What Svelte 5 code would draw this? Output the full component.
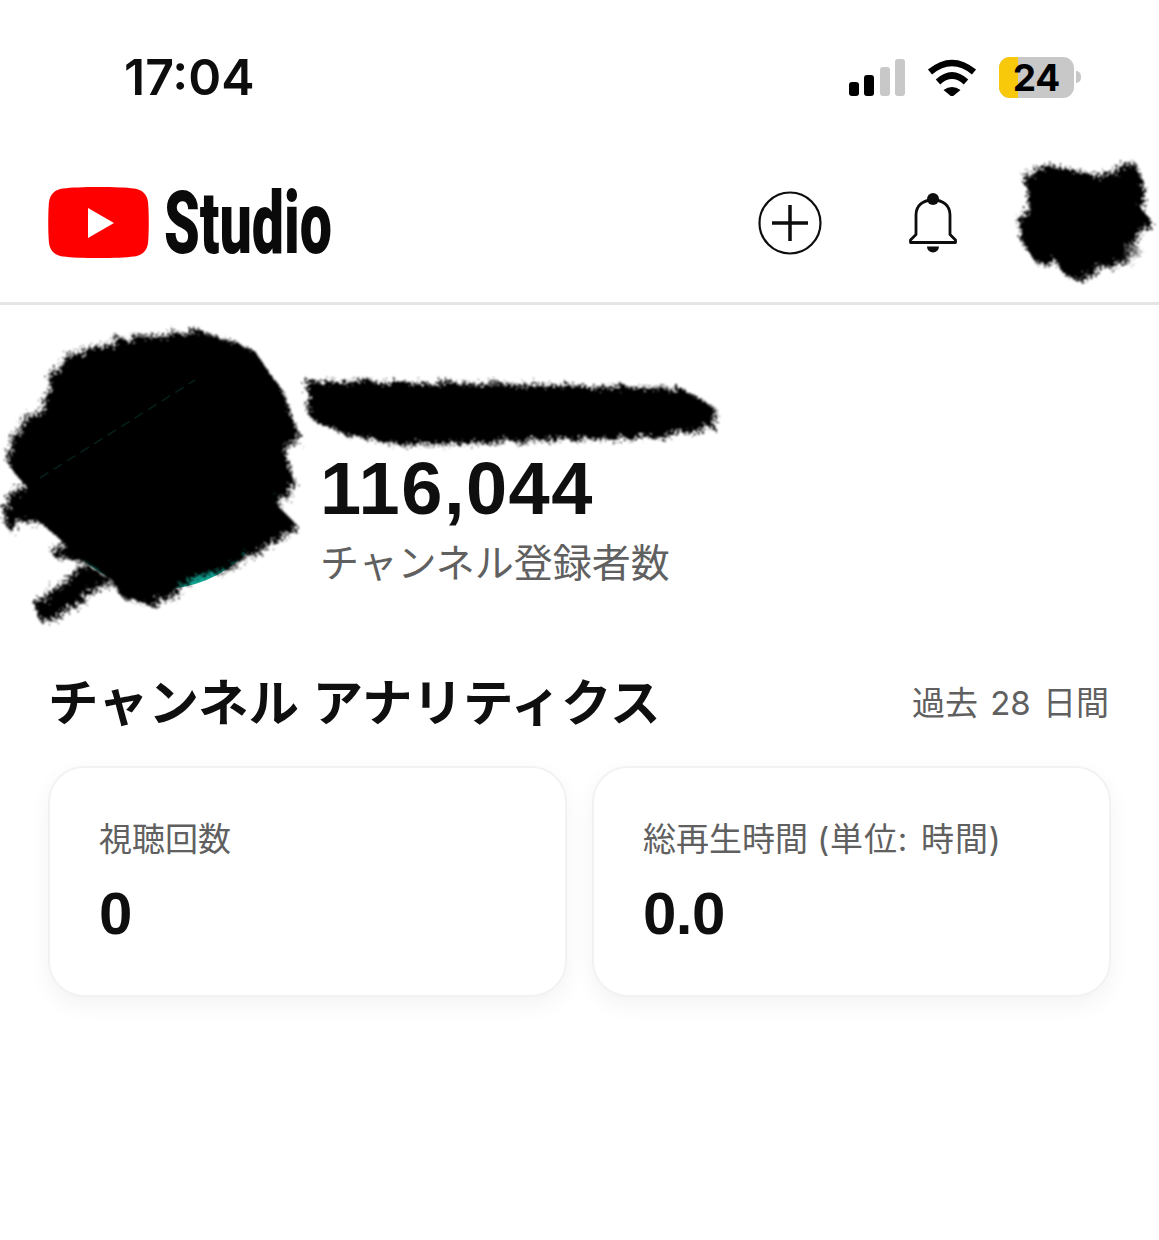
<script>
  const cards = [
    { label: '視聴回数', unit: '', value: '0' },
    { label: '総再生時間', unit: '(単位: 時間)', value: '0.0' }
  ];
</script>

<div class="page">
  <div class="status">
    <span class="time">17:04</span>
    <div class="status-icons">
      <div class="signal">
        <i class="bar on b1"></i>
        <i class="bar on b2"></i>
        <i class="bar b3"></i>
        <i class="bar b4"></i>
      </div>
      <svg class="wifi" width="50" height="37" viewBox="0 0 50 37">
        <path d="M3 13Q25 -5 47 13" fill="none" stroke="#000" stroke-width="6.5" />
        <path d="M11 23Q25 10 39 23" fill="none" stroke="#000" stroke-width="6.5" />
        <path d="M16.500 31Q25 25 33.500 31L25 38Z" fill="#000" />
      </svg>
      <div class="battery">
        <div class="battery-body">
          <span class="battery-level"></span>
          <span class="battery-text">24</span>
        </div>
        <i class="battery-nub"></i>
      </div>
    </div>
  </div>

  <header class="header">
    <div class="logo">
      <svg width="101" height="71" viewBox="0 0 101 71">
        <path d="M50.500 0C66 0 78 .5 86 1.500C94 2.500 99 7 100 15C101 24 101 47 100 56C99 64 94 68.500 86 69.500C78 70.500 66 71 50.500 71C35 71 23 70.500 15 69.500C7 68.500 2 64 1 56C0 47 0 24 1 15C2 7 7 2.500 15 1.500C23 .5 35 0 50.500 0Z" fill="#ff0000" />
        <path d="M40 21L66 36L40 51Z" fill="#fff" />
      </svg>
      <span class="logo-text">Studio</span>
    </div>
    <div class="actions">
      <svg width="64" height="64" viewBox="0 0 64 64">
        <circle cx="32" cy="32" r="30.500" fill="none" stroke="#0d0d0d" stroke-width="2.200" />
        <path d="M14 32H50M32 14V50" fill="none" stroke="#0d0d0d" stroke-width="3.500" />
      </svg>
      <svg width="48" height="60" viewBox="0 0 48 60">
        <path d="M1.500 49.500H46.500V47L41 41.500V22C41 12.500 34 7 24 7C14 7 7 12.500 7 22V41.500L1.500 47Z" fill="none" stroke="#0d0d0d" stroke-width="2.800" stroke-linejoin="round" />
        <circle cx="24" cy="6" r="6" fill="#0d0d0d" />
        <path d="M18 53.500H30A6 6 0 0 1 18 53.500Z" fill="#0d0d0d" />
      </svg>
      <div class="account-slot"></div>
    </div>
  </header>

  <section class="channel">
    <div class="channel-avatar"></div>
    <div class="channel-info">
      <div class="name-slot"></div>
      <div class="count">116,044</div>
      <div class="count-label">チャンネル登録者数</div>
    </div>
  </section>

  <section class="analytics">
    <div class="analytics-head">
      <h2>チャンネル アナリティクス</h2>
      <span class="period">過去 28 日間</span>
    </div>
    <div class="cards">
      {#each cards as card}
        <div class="card">
          <div class="card-label">{card.label} <span class="card-unit">{card.unit}</span></div>
          <div class="card-value">{card.value}</div>
        </div>
      {/each}
    </div>
  </section>

  <!-- hand-drawn redaction marks over the avatar, channel name and account icon -->
  <svg class="scribbles" width="1159" height="1240" viewBox="0 0 1159 1240">
    <defs>
      <filter id="rough" x="-10%" y="-10%" width="120%" height="120%">
        <feTurbulence type="fractalNoise" baseFrequency="0.07" numOctaves="2" seed="7" result="wide" />
        <feDisplacementMap in="SourceGraphic" in2="wide" scale="12" result="wobble" />
        <feTurbulence type="fractalNoise" baseFrequency="0.45" numOctaves="3" seed="4" result="fine" />
        <feDisplacementMap in="wobble" in2="fine" scale="18" />
        <feGaussianBlur stdDeviation="0.8" />
      </filter>
    </defs>
    <g filter="url(#rough)" fill="#000">
      <path d="M201 330L253 349L283 392L297 430L285 455L295 480L280 508L299 527L232 568L190 581L154 606L122 598L112 580L89 564L54 557L61 540L33 517L7 531L2 507L23 483L7 463L9 447L28 420L50 398L50 378L72 352L150 334Z" />
      <path d="M42 625L35 603L89 566L114 582Z" />
      <path d="M309 380L680 388L716 408L716 428L672 436L400 446L345 434L309 418Z" />
      <path d="M1025 178L1043 165L1083 172L1107 174L1137 164L1146 193L1142 210L1151 220L1141 232L1130 245L1127 258L1080 278L1063 275L1060 263L1037 265L1027 250L1019 237L1017 217L1029 207Z" />
      <path d="M1120 245L1143 249L1125 262L1105 262Z" opacity="0.6" />
    </g>
    <path d="M40 478L195 380" stroke="#0f5a52" stroke-width="1.500" stroke-dasharray="10 6" opacity="0.35" />
  </svg>
</div>

<style>
  :global(body) {
    background: #fff;
  }

  .page {
    position: relative;
    width: 1159px;
    min-height: 1240px;
    overflow: hidden;
    color: #0d0d0d;
    font-family: Roboto, "Noto Sans CJK JP", sans-serif;
  }

  .status {
    display: flex;
    align-items: center;
    justify-content: space-between;
    height: 154px;
    padding: 0 78px 0 124px;
    box-sizing: border-box;
  }

  .time {
    font-family: Inter, sans-serif;
    font-size: 50px;
    font-weight: 600;
  }

  .status-icons {
    display: flex;
    align-items: center;
    gap: 22px;
  }

  .signal {
    display: flex;
    align-items: flex-end;
    gap: 5.500px;
    height: 37px;
  }

  .bar {
    width: 10px;
    border-radius: 3px;
    background: #c8c8c8;
  }

  .bar.on {
    background: #000;
  }

  .b1 { height: 14px; }
  .b2 { height: 21px; }
  .b3 { height: 29px; }
  .b4 { height: 37px; }

  .battery {
    display: flex;
    align-items: center;
    gap: 2px;
  }

  .battery-body {
    position: relative;
    display: flex;
    align-items: center;
    justify-content: center;
    width: 75px;
    height: 41px;
    border-radius: 11px;
    background: #c8c8c8;
  }

  .battery-level {
    position: absolute;
    left: 0;
    top: 0;
    bottom: 0;
    width: 19px;
    border-radius: 11px 0 0 11px;
    background: #f8c80a;
  }

  .battery-text {
    position: relative;
    font-family: Inter, sans-serif;
    font-size: 37px;
    line-height: 41px;
    font-weight: 700;
    color: #000;
  }

  .battery-nub {
    width: 5px;
    height: 12px;
    border-radius: 0 6px 6px 0;
    background: #c8c8c8;
  }

  .header {
    display: flex;
    align-items: center;
    justify-content: space-between;
    height: 151px;
    padding: 0 6px 11px 48px;
    box-sizing: border-box;
    border-bottom: 3px solid #e5e5e5;
  }

  .logo {
    display: flex;
    align-items: center;
    gap: 15px;
  }

  .logo svg {
    display: block;
  }

  .logo-text {
    width: 168px;
    font-size: 88px;
    line-height: 71px;
    font-weight: 900;
    color: #0a0a0a;
    transform: scaleX(0.65);
    transform-origin: left center;
    white-space: nowrap;
  }

  .actions {
    display: flex;
    align-items: center;
    gap: 58px;
  }

  .actions svg:first-child {
    margin-right: 29px;
  }

  .account-slot {
    width: 138px;
    height: 120px;
  }

  .channel {
    display: flex;
    gap: 40px;
    padding: 22px 0 0 42px;
  }

  .channel-avatar {
    flex: none;
    width: 238px;
    height: 238px;
    margin-top: 24px;
    border-radius: 50%;
    background: #12a594;
  }

  .name-slot {
    height: 126px;
  }

  .count {
    font-family: "Liberation Sans", sans-serif;
    font-size: 74px;
    line-height: 72px;
    font-weight: 700;
    letter-spacing: 1.500px;
    color: #0f0f0f;
  }

  .count-label {
    margin-top: 10px;
    font-family: "Noto Sans CJK JP", sans-serif;
    font-size: 39px;
    line-height: 50px;
    color: #606060;
    white-space: nowrap;
  }

  .analytics {
    padding-top: 80px;
  }

  .analytics-head {
    display: flex;
    align-items: flex-start;
    justify-content: space-between;
    padding: 0 50px 0 48px;
    margin-bottom: 33px;
  }

  h2 {
    margin: 0;
    font-family: "Noto Sans CJK JP", sans-serif;
    font-size: 50.500px;
    line-height: 60px;
    font-weight: 700;
    word-spacing: 2px;
    color: #0f0f0f;
  }

  .period {
    margin-top: 4px;
    font-family: Inter, "Noto Sans CJK JP", sans-serif;
    font-size: 33px;
    line-height: 60px;
    word-spacing: 3px;
    color: #606060;
  }

  .cards {
    display: grid;
    grid-template-columns: 1fr 1fr;
    gap: 25px;
    padding: 0 48px;
  }

  .card {
    height: 231px;
    padding: 49px 0 0 49px;
    box-sizing: border-box;
    border: 2px solid #f2f2f2;
    border-radius: 36px;
    background: #fff;
    box-shadow: 0 8px 22px rgba(0, 0, 0, 0.05);
  }

  .card-label {
    font-family: Inter, "Noto Sans CJK JP", sans-serif;
    font-size: 33px;
    line-height: 44px;
    color: #606060;
    white-space: nowrap;
  }

  .card-unit {
    letter-spacing: 0.800px;
    word-spacing: 3px;
  }

  .card-value {
    margin-top: 18px;
    font-family: "Liberation Sans", sans-serif;
    font-size: 60px;
    line-height: 70px;
    font-weight: 700;
    letter-spacing: -0.500px;
    color: #0f0f0f;
  }

  .scribbles {
    position: absolute;
    left: 0;
    top: 0;
    pointer-events: none;
  }
</style>
